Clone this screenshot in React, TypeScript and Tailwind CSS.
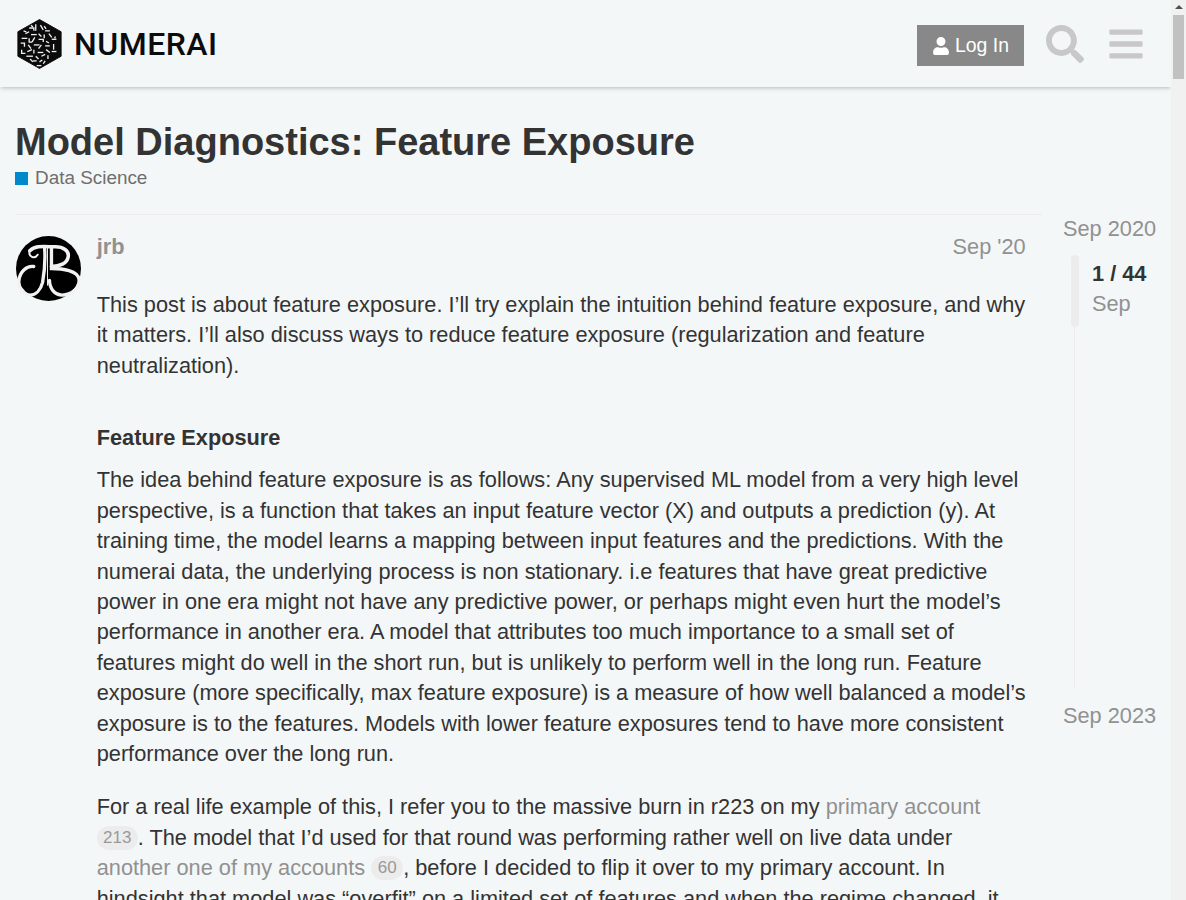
import React from 'react';
import { FaBars, FaSearch, FaUser } from 'react-icons/fa';

const logoDashes = [
  'M28 27h5v3', 'M35 23v7', 'M40 24l3 5', 'M45 30h5', 'M24 33l4-2', 'M30 34h6', 'M38 33l3 3', 'M44 34v4',
  'M49 33l3 4', 'M20 38h6', 'M28 38v4h3', 'M34 37l-3 5', 'M38 39h5v3', 'M46 41l3 2', 'M52 39h5', 'M19 43h4v4',
  'M27 45l3 4', 'M33 45h6', 'M41 45l-3 4', 'M45 46h5', 'M54 44v6', 'M20 50v4h4', 'M26 52l5-2', 'M33 50v4',
  'M37 53h6', 'M46 50l4 3', 'M52 52h5', 'M25 57h7', 'M35 57l3 3', 'M41 57l4-2', 'M48 56v4', 'M32 62h4', 'M39 63l3-2',
  'M45 62l-2 3', 'M29 60l3 3', 'M41 67h-5', 'M30 24l2 2', 'M44 25l2 3', 'M22 30l3 1', 'M56 36l-1 2',
];

const NumeraiLogo: React.FC = () => (
  <div className="flex items-center gap-[11px]">
    <svg viewBox="14 17 50 54" className="h-[54px] w-[47px]">
      <path d="M39 18L62 31V57L39 70L16 57V31Z" fill="#0b0b0b" stroke="#0b0b0b" strokeLinejoin="round" />
      <g fill="none" stroke="#f0f0f0" strokeWidth="1.4">
        {logoDashes.map((d) => (
          <path key={d} d={d} />
        ))}
      </g>
    </svg>
    <span className="font-['Roboto',sans-serif] text-[32px] leading-none font-medium tracking-[0.5px] text-[#0c0c0c]">
      NUMERAI
    </span>
  </div>
);

const Avatar: React.FC = () => (
  <svg viewBox="0 0 66 66" className="h-[65px] w-[65px] shrink-0">
    <circle cx="33" cy="33" r="33" fill="#000" />
    <g fill="none" stroke="#f2f2f2" strokeLinecap="round">
      <path d="M29 11C30 24 29 36 27 47C25 55 20 60 14 60C7 60 2 52 3 45C4 36 11 30 18 31" strokeWidth="3.4" />
      <path d="M36 11V33C47 33 63 35 64 44C65 54 55 60 47 60C39 60 34 53 34 45" strokeWidth="3.4" />
      <path d="M14 15C20 9 30 11 40 11C48 11 54 15 53 21C52 28 44 31 36 31" strokeWidth="3.6" />
      <path d="M14 15C12 21 19 24 22 19" strokeWidth="2" />
      <path d="M32 12V50" strokeWidth="1" />
    </g>
  </svg>
);

const Badge: React.FC<{ children: React.ReactNode; className?: string }> = ({ children, className }) => (
  <span className={`inline-block rounded-full bg-[#ececec] text-center text-[17px] leading-[24px] text-[#999] align-[2px] ${className}`}>
    {children}
  </span>
);

const Timeline: React.FC = () => (
  <aside className="ml-[21px] flex w-[93px] flex-col pt-[2px] text-[21.76px] text-[#919191]">
    <div className="h-[25px] text-center leading-[25px] whitespace-nowrap">Sep 2020</div>
    <div className="relative ml-[11px] mt-[14px] h-[433px] border-l border-[#ececec]">
      <div className="absolute -left-[4px] top-0 h-[72px] w-[8px] rounded-full bg-[#ececec]" />
      <div className="pl-[17px] pt-[4px]">
        <div className="leading-[30px] font-bold whitespace-nowrap text-[#333]">1 / 44</div>
        <div className="leading-[30px]">Sep</div>
      </div>
    </div>
    <div className="mt-[15px] text-center leading-[25px] whitespace-nowrap">Sep 2023</div>
  </aside>
);

export default function App() {
  return (
    <div className="flex h-[900px] overflow-hidden bg-[#f4f7f8] font-['Liberation_Sans',Arial,sans-serif] text-[#333]">
      <div className="min-w-0 flex-1">
        <header className="flex h-[87px] items-center bg-[#f4f7f8] pl-[16px] pr-[28px] shadow-[0_2px_4px_-1px_rgba(0,0,0,0.25)]">
          <NumeraiLogo />
          <div className="flex-1" />
          <button className="mt-[4px] flex h-[41px] w-[107px] items-center justify-center gap-[5px] bg-[#888] text-[19.4px] text-white">
            <FaUser className="h-[18px] w-[18px]" />
            Log In
          </button>
          <FaSearch className="ml-[22px] h-[38px] w-[38px] text-[#c8c8c8]" />
          <FaBars className="ml-[25px] h-[38px] w-[34px] text-[#c8c8c8]" />
        </header>

        <div className="px-[15px] pt-[33px]">
          <h1 className="text-[38px] leading-[44px] font-bold">Model Diagnostics: Feature Exposure</h1>
          <div className="mt-[1px] flex items-center gap-[7px] text-[18.9px] leading-[26px] text-[#6e6e6e]">
            <span className="h-[13px] w-[13px] bg-[#0088cc]" />
            Data Science
          </div>

          <div className="mt-[23px] flex">
            <article className="flex w-[1027px] shrink-0 border-t border-[#ececec] pt-[21px]">
              <div className="ml-[1px] mr-[15.7px]">
                <Avatar />
              </div>
              <div className="w-[929px] text-[21.76px] leading-[30.46px]">
                <div className="flex justify-between leading-[22px]">
                  <span className="font-bold text-[#919191]">jrb</span>
                  <span className="text-[#919191]">Sep '20</span>
                </div>
                <p className="mt-[32px]">
                  This post is about feature exposure. I’ll try explain the intuition behind feature exposure, and why it matters. I’ll also discuss ways to reduce feature exposure (regularization and feature neutralization).
                </p>
                <h2 className="mt-[41.6px] font-bold">Feature Exposure</h2>
                <p className="mt-[11.8px]">
                  The idea behind feature exposure is as follows: Any supervised ML model from a very high level perspective, is a function that takes an input feature vector (X) and outputs a prediction (y). At training time, the model learns a mapping between input features and the predictions. With the numerai data, the underlying process is non stationary. i.e features that have great predictive power in one era might not have any predictive power, or perhaps might even hurt the model’s performance in another era. A model that attributes too much importance to a small set of features might do well in the short run, but is unlikely to perform well in the long run. Feature exposure (more specifically, max feature exposure) is a measure of how well balanced a model’s exposure is to the features. Models with lower feature exposures tend to have more consistent performance over the long run.
                </p>
                <p className="mt-[22.6px]">
                  For a real life example of this, I refer you to the massive burn in r223 on my{' '}
                  <a className="text-[#919191]">primary account</a>{' '}
                  <Badge className="w-[41px]">213</Badge>. The model that I’d used for that round was performing rather well on live data under{' '}
                  <a className="text-[#919191]">another one of my accounts</a>{' '}
                  <Badge className="w-[32px]">60</Badge>, before I decided to flip it over to my primary account. In hindsight that model was “overfit” on a limited set of features and when the regime changed, it suffered heavily.
                </p>
              </div>
            </article>
            <Timeline />
          </div>
        </div>
      </div>

      <div className="flex w-[15px] shrink-0 flex-col items-center bg-[#f1f1f1]">
        <div className="mt-[5px] h-0 w-0 border-x-[4px] border-b-[4px] border-x-transparent border-b-[#505050]" />
        <div className="mt-[6px] h-[64px] w-[11px] bg-[#c1c1c1]" />
      </div>
    </div>
  );
}
